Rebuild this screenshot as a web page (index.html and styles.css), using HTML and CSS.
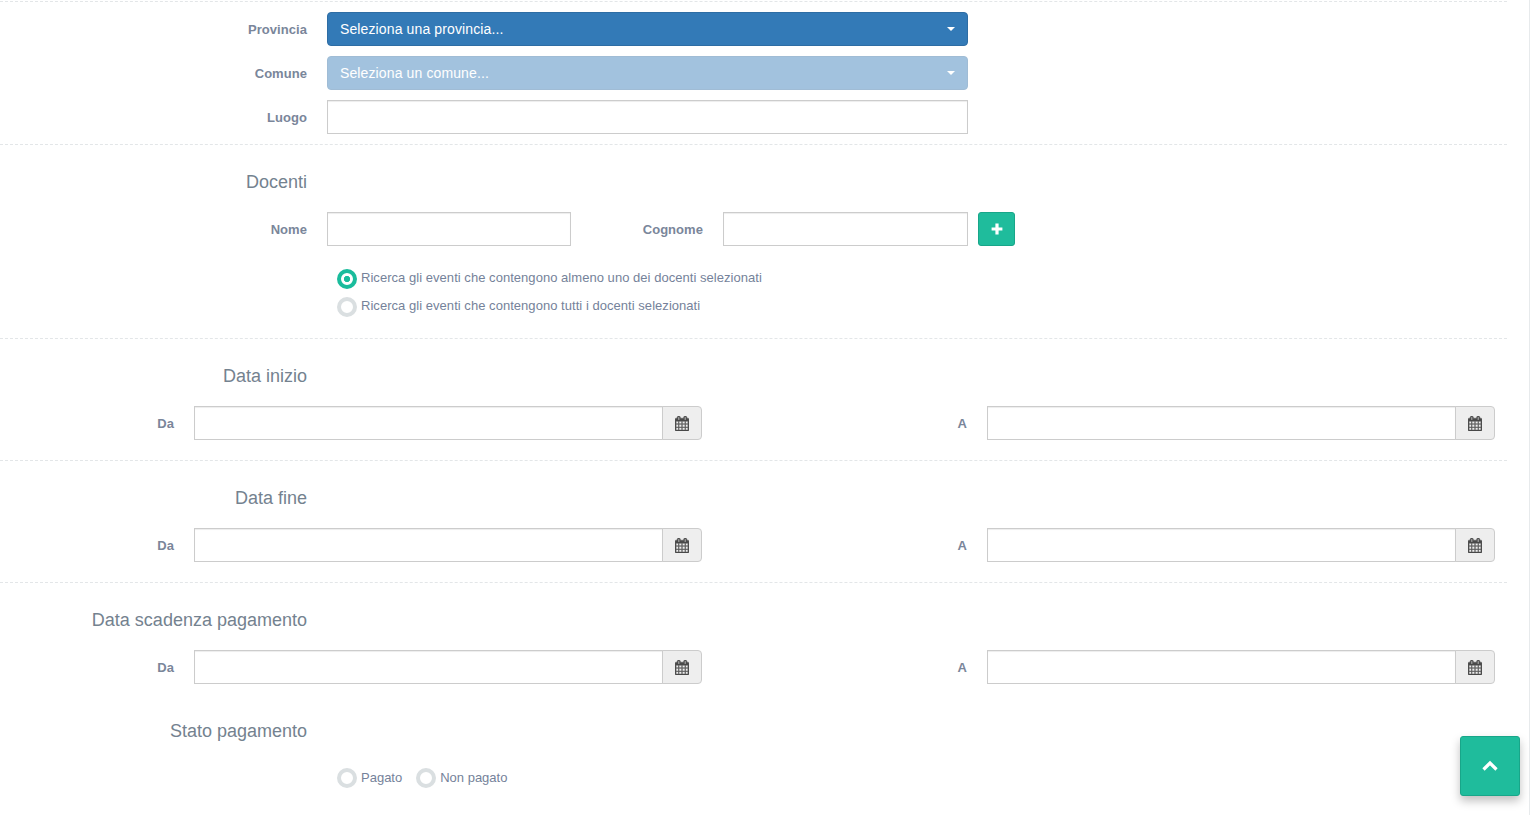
FILE: index.html
```html
<!DOCTYPE html>
<html lang="it">
<head>
<meta charset="utf-8">
<title>Ricerca eventi</title>
<link rel="stylesheet" href="styles.css">
</head>
<body>
<svg class="defs" width="0" height="0" aria-hidden="true">
  <symbol id="cal" viewBox="0 0 1664 1792"><path d="M128 1664h288v-288h-288v288zm352 0h320v-288h-320v288zm-352-352h288v-320h-288v320zm352 0h320v-320h-320v320zm-352-384h288v-288h-288v288zm736 736h320v-288h-320v288zm-384-736h320v-288h-320v288zm768 736h288v-288h-288v288zm-384-352h320v-320h-320v320zm-352-864v-288q0-13-9.5-22.5t-22.5-9.5h-64q-13 0-22.5 9.5t-9.5 22.5v288q0 13 9.5 22.5t22.5 9.5h64q13 0 22.5-9.5t9.5-22.5zm736 864h288v-320h-288v320zm-384-384h320v-288h-320v288zm384 0h288v-288h-288v288zm32-480v-288q0-13-9.5-22.5t-22.5-9.5h-64q-13 0-22.5 9.5t-9.5 22.5v288q0 13 9.5 22.5t22.5 9.5h64q13 0 22.5-9.5t9.5-22.5zm384-64v1280q0 52-38 90t-90 38h-1408q-52 0-90-38t-38-90v-1280q0-52 38-90t90-38h128v-96q0-66 47-113t113-47h64q66 0 113 47t47 113v96h384v-96q0-66 47-113t113-47h64q66 0 113 47t47 113v96h128q52 0 90 38t38 90z"/></symbol>
</svg>
<div class="page">
<main class="form">
  <section class="section first">
    <div class="row">
      <label class="label">Provincia</label>
      <button class="select" type="button"><span>Seleziona una provincia...</span><i class="caret"></i></button>
    </div>
    <div class="row">
      <label class="label">Comune</label>
      <button class="select disabled" type="button"><span>Seleziona un comune...</span><i class="caret"></i></button>
    </div>
    <div class="row">
      <label class="label">Luogo</label>
      <input class="input" type="text">
    </div>
  </section>

  <section class="section docenti">
    <h3 class="heading">Docenti</h3>
    <div class="teachers">
      <label class="label">Nome</label>
      <input class="input" type="text">
      <label class="label">Cognome</label>
      <div class="input-with-btn">
        <input class="input" type="text">
        <button class="add" type="button" aria-label="Aggiungi">
          <svg width="12" height="12" viewBox="0 0 12 12"><path d="M4.4 0.6h3.2v3.8h3.8v3.2H7.6v3.8H4.4V7.600H0.600V4.400h3.800z"/></svg>
        </button>
      </div>
    </div>
    <div class="radios stacked">
      <div class="radio-item"><span class="radio on"></span><span>Ricerca gli eventi che contengono almeno uno dei docenti selezionati</span></div>
      <div class="radio-item"><span class="radio"></span><span>Ricerca gli eventi che contengono tutti i docenti selezionati</span></div>
    </div>
  </section>

  <section class="section dates">
    <h3 class="heading">Data inizio</h3>
    <div class="date-row">
      <label class="label">Da</label>
      <div class="date"><input class="input" type="text"><span class="addon"><svg class="cal"><use href="#cal"/></svg></span></div>
      <label class="label">A</label>
      <div class="date"><input class="input" type="text"><span class="addon"><svg class="cal"><use href="#cal"/></svg></span></div>
    </div>
  </section>

  <section class="section dates">
    <h3 class="heading">Data fine</h3>
    <div class="date-row">
      <label class="label">Da</label>
      <div class="date"><input class="input" type="text"><span class="addon"><svg class="cal"><use href="#cal"/></svg></span></div>
      <label class="label">A</label>
      <div class="date"><input class="input" type="text"><span class="addon"><svg class="cal"><use href="#cal"/></svg></span></div>
    </div>
  </section>

  <section class="section last">
    <h3 class="heading">Data scadenza pagamento</h3>
    <div class="date-row">
      <label class="label">Da</label>
      <div class="date"><input class="input" type="text"><span class="addon"><svg class="cal"><use href="#cal"/></svg></span></div>
      <label class="label">A</label>
      <div class="date"><input class="input" type="text"><span class="addon"><svg class="cal"><use href="#cal"/></svg></span></div>
    </div>
    <h3 class="heading stato">Stato pagamento</h3>
    <div class="radios inline">
      <div class="radio-item"><span class="radio"></span><span>Pagato</span></div>
      <div class="radio-item"><span class="radio"></span><span>Non pagato</span></div>
    </div>
  </section>
</main>
</div>
<a class="to-top" href="#" aria-label="Torna su">
  <svg width="18" height="12" viewBox="0 0 18 12"><path d="M2.500 9.500 9 3l6.500 6.500" fill="none" stroke="#fff" stroke-width="3.200"/></svg>
</a>
</body>
</html>
```
FILE: styles.css
```css
* { box-sizing: border-box; }
html, body { margin: 0; padding: 0; height: 815px; overflow: hidden; background: #fff; }
body { font-family: "Liberation Sans", Arial, sans-serif; font-size: 13px; color: #676a6c; }
.defs { position: absolute; }
.page { width: 1530px; height: 815px; padding-top: 1px; border-right: 1px solid #e7eaec; }
.form { width: 1507px; }
.section { border-top: 1px dashed #e3e6e8; padding-top: 20px; padding-bottom: 20px; }
.section.first { padding-top: 10px; padding-bottom: 10px; display: flex; flex-direction: column; gap: 10px; }
.section.docenti { padding-bottom: 21px; }
.section.last { padding-bottom: 0; }
.row { display: grid; grid-template-columns: 307px 641px; column-gap: 20px; }
.label { height: 34px; font-weight: 700; font-size: 13px; line-height: 36px; letter-spacing: .05px; text-align: right; color: #7a869a; }
.heading { margin: 0 0 13px; width: 307px; font-size: 18px; font-weight: 400; line-height: 34px; text-align: right; color: #74828f; }
.heading.stato { margin: 30px 0 20px; }
.input { display: block; width: 100%; height: 34px; min-width: 0; padding: 6px 12px; border: 1px solid #ccc; border-radius: 0; background: #fff; box-shadow: inset 0 1px 1px rgba(0,0,0,.075); font: inherit; outline: none; }
.select { display: flex; align-items: center; justify-content: space-between; height: 34px; padding: 0 12px; border: 1px solid #2e6da4; border-radius: 4px; background: #337ab7; color: #fff; font: 14px "Liberation Sans", Arial, sans-serif; letter-spacing: .12px; }
.select.disabled { opacity: .45; }
.caret { width: 0; height: 0; border-top: 4px solid #fff; border-left: 4px solid transparent; border-right: 4px solid transparent; }
.teachers { display: grid; grid-template-columns: 307px 244px 112px 292px; column-gap: 20px; }
.input-with-btn { display: grid; grid-template-columns: 245px 37px; column-gap: 10px; }
.add { display: flex; align-items: center; justify-content: center; height: 34px; padding: 0; border: 1px solid #18a689; border-radius: 3px; background: #1fbc9c; }
.add svg { fill: #fff; }
.radios { padding-left: 337px; }
.radios.stacked { display: flex; flex-direction: column; gap: 8px; margin-top: 23px; }
.radios.stacked .radio-item { line-height: 18px; letter-spacing: .04px; }
.radios.inline { display: flex; gap: 14px; }
.radio-item { display: flex; gap: 4px; height: 20px; line-height: 20px; font-size: 13px; color: #75829a; }
.radio { display: block; flex: none; width: 20px; height: 20px; border: 4px solid #dadfe1; border-radius: 50%; background: #fff; }
.radio.on { border-color: #1abc9c; background: radial-gradient(circle, #1abc9c 0 2.800px, #fff 3.500px); }
.date-row { display: grid; grid-template-columns: 174px 508px 245px 508px; column-gap: 20px; }
.date { display: flex; }
.date .input { flex: 1; }
.addon { display: flex; flex: none; align-items: center; justify-content: center; width: 40px; height: 34px; margin-left: -1px; border: 1px solid #ccc; border-radius: 0 4px 4px 0; background: #eee; }
.cal { display: block; width: 14px; height: 15px; margin-left: -1px; fill: #4a4a4a; stroke: #4a4a4a; stroke-width: 50px; }
.to-top { position: fixed; left: 1460px; top: 736px; display: flex; align-items: center; justify-content: center; width: 60px; height: 60px; border: 1px solid #18a689; border-radius: 3px; background: #1fbc9c; box-shadow: 0 5px 10px rgba(0,0,0,.25); }
```
